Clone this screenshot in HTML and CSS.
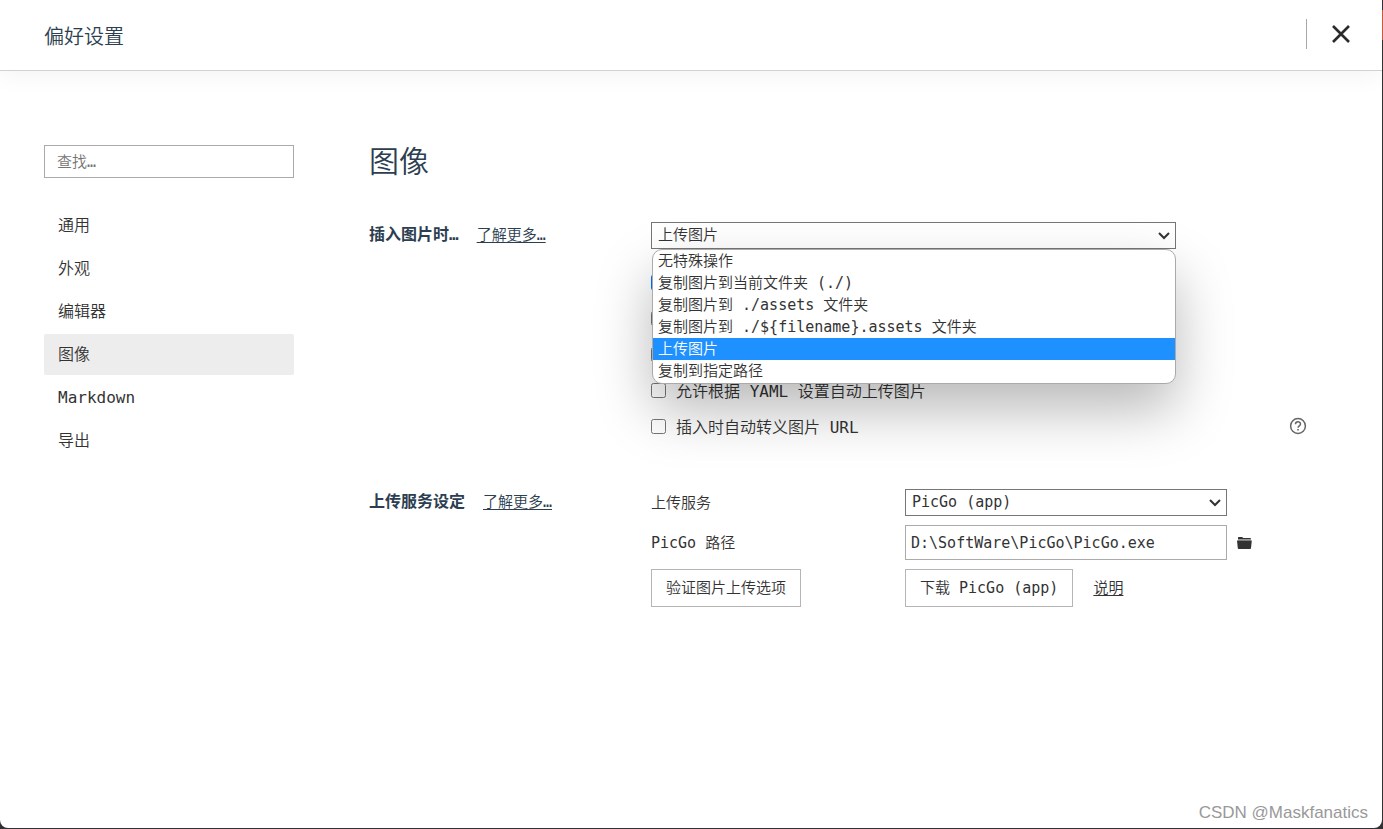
FILE: index.html
```html
<!DOCTYPE html>
<html lang="zh-CN">
<head>
<meta charset="utf-8">
<title>偏好设置</title>
<link rel="stylesheet" href="styles.css">
</head>
<body>
<div class="window">
  <header class="header">
    <h1 class="header-title">偏好设置</h1>
    <button class="close" type="button" aria-label="关闭">
      <svg width="20" height="20" viewBox="0 0 20 20"><path d="M2 2L18 18M18 2L2 18" fill="none" stroke="#2b2b2e" stroke-width="2.6"/></svg>
    </button>
  </header>

  <div class="body">
    <aside class="sidebar">
      <input class="search" type="text" placeholder="查找…" aria-label="查找">
      <nav class="nav">
        <a class="nav-item" href="#general">通用</a>
        <a class="nav-item" href="#appearance">外观</a>
        <a class="nav-item" href="#editor">编辑器</a>
        <a class="nav-item active" href="#image" aria-current="page">图像</a>
        <a class="nav-item" href="#markdown">Markdown</a>
        <a class="nav-item" href="#export">导出</a>
      </nav>
    </aside>

    <main class="main">
      <h2 class="page-title">图像</h2>

      <section class="section">
        <div class="section-label">
          <label class="section-name" for="insert">插入图片时…</label>
          <a class="link" href="#more-insert">了解更多…</a>
        </div>
        <div class="section-content">
          <div class="insert">
            <div class="select-wrap">
              <select class="select" id="insert"><option>上传图片</option></select>
              <svg class="chevron" width="12" height="8" viewBox="0 0 12 8"><path d="M1 1L6 6L11 1" fill="none" stroke="#333" stroke-width="2"/></svg>
            </div>
            <ul class="menu" role="listbox" aria-label="插入图片时">
              <li class="option" role="option">无特殊操作</li>
              <li class="option" role="option">复制图片到当前文件夹 (./)</li>
              <li class="option" role="option">复制图片到 ./assets 文件夹</li>
              <li class="option" role="option">复制图片到 ./${filename}.assets 文件夹</li>
              <li class="option selected" role="option" aria-selected="true">上传图片</li>
              <li class="option" role="option">复制到指定路径</li>
            </ul>
          </div>
          <div class="checks">
            <div class="check"><input class="box" type="checkbox" checked aria-label="对本地位置的图片应用上述规则"></div>
            <div class="check"><input class="box" type="checkbox" aria-label="对网络位置的图片应用上述规则"></div>
            <div class="check"><input class="box" type="checkbox" aria-label="优先使用相对路径"></div>
            <div class="check"><input class="box" type="checkbox" id="yaml"><label class="check-label" for="yaml">允许根据 YAML 设置自动上传图片</label></div>
            <div class="check">
              <input class="box" type="checkbox" id="escape"><label class="check-label" for="escape">插入时自动转义图片 URL</label>
              <button class="help" type="button" aria-label="帮助">
                <svg width="18" height="18" viewBox="0 0 18 18" fill="none" stroke="#666"><circle cx="9" cy="9" r="7.4" stroke-width="1.5"/><path d="M6.5 7.3C6.5 4 11.5 4 11.5 7C11.5 8.9 9 8.8 9 10.8" stroke-width="1.5"/><path d="M9 12v1.6" stroke-width="1.6"/></svg>
              </button>
            </div>
          </div>
        </div>
      </section>

      <section class="section">
        <div class="section-label">
          <h3 class="section-name">上传服务设定</h3>
          <a class="link" href="#more-upload">了解更多…</a>
        </div>
        <div class="section-content upload">
          <label for="service">上传服务</label>
          <div class="select-wrap">
            <select class="select" id="service"><option>PicGo (app)</option></select>
            <svg class="chevron" width="12" height="8" viewBox="0 0 12 8"><path d="M1 1L6 6L11 1" fill="none" stroke="#333" stroke-width="2"/></svg>
          </div>
          <span></span>
          <label for="path">PicGo 路径</label>
          <input class="path" id="path" type="text" value="D:\SoftWare\PicGo\PicGo.exe">
          <button class="browse" type="button" aria-label="选择文件">
            <svg width="16" height="14" viewBox="0 0 16 14"><path d="M1 3V1.6Q1 1 1.6 1H5.2L6.2 2H13.2Q14 2 14 3.4H1Z" fill="#333"/><path d="M1 4H14" stroke="#999" stroke-width="1"/><path d="M0 4.5H14.8L14 12.2Q13.9 13 13.1 13H1.7Q.9 13 .8 12.2Z" fill="#333"/></svg>
          </button>
          <div><button class="button" type="button">验证图片上传选项</button></div>
          <div class="actions">
            <button class="button" type="button">下载 PicGo (app)</button>
            <a class="link" href="#docs">说明</a>
          </div>
        </div>
      </section>
    </main>
  </div>
  <div class="watermark">CSDN @Maskfanatics</div>
</div>
<div class="edge"></div>
</body>
</html>
```
FILE: styles.css
```css
* { box-sizing: border-box; }

body {
  margin: 0;
  background: #333033;
  color: #333;
  font: 350 15px/22px "DejaVu Sans Mono", "Noto Sans CJK SC", monospace;
}

button, input, select {
  margin: 0;
  font: inherit;
  color: inherit;
}

h1, h2, h3, ul { margin: 0; padding: 0; }

.window {
  position: relative;
  min-height: calc(100vh - 1px);
  margin-right: 1px;
  background: #fff;
  border-radius: 0 0 8px 8px;
  overflow: hidden;
}

.edge {
  position: absolute;
  top: 10px;
  right: 0;
  width: 1px;
  height: 30px;
  background: #c85a3c;
}

.header {
  display: flex;
  align-items: center;
  justify-content: space-between;
  height: 71px;
  padding: 0 31px 0 44px;
  border-bottom: 1px solid #d2d2d2;
  box-shadow: 0 4px 24px rgba(0, 0, 0, .05);
}

.header-title {
  padding-top: 4px;
  font-size: 20px;
  line-height: 30px;
  font-weight: 350;
  color: #2c3e50;
}

.close {
  display: flex;
  align-items: center;
  height: 30px;
  margin-bottom: 3px;
  padding: 0 0 0 24px;
  border: 0;
  border-left: 1px solid #a8a8a8;
  background: none;
}

.body {
  display: flex;
  gap: 75px;
  padding: 74px 75px 80px 44px;
}

.sidebar { flex: 0 0 250px; }

.search {
  display: block;
  width: 100%;
  height: 33px;
  padding: 0 12px;
  border: 1px solid #aaa;
  background: #fff;
}

.search::placeholder { color: #757575; }

.nav {
  display: grid;
  gap: 2px;
  margin-top: 27px;
  font-size: 16px;
}

.nav-item {
  padding: 10px 14px;
  line-height: 21px;
  border-radius: 2px;
  color: #333;
  text-decoration: none;
}

.active { background: #ededed; }

.main { flex: 1; min-width: 0; }

.page-title {
  font-size: 30px;
  line-height: 34px;
  font-weight: 350;
  color: #2c3e50;
}

.section {
  display: flex;
  margin-top: 43px;
}

.section-label {
  flex: 0 0 282px;
  display: flex;
  align-items: center;
  gap: 18px;
  height: 25px;
  color: #2c3e50;
}

.section-name {
  font-size: 16px;
  line-height: 24px;
  font-weight: 600;
}

.link {
  color: inherit;
  text-underline-offset: 2px;
}

.section-content { flex: 1; min-width: 0; }

.insert {
  position: relative;
  width: 80%;
}

.select-wrap {
  display: grid;
  align-items: center;
}

.select, .chevron { grid-area: 1 / 1; }

.select {
  width: 100%;
  height: 27px;
  padding: 0 24px 2px 6px;
  border: 1px solid #767676;
  border-radius: 0;
  background: #fff;
  appearance: none;
}

.chevron {
  justify-self: end;
  margin-right: 6px;
  pointer-events: none;
}

.menu {
  position: absolute;
  z-index: 2;
  top: 100%;
  left: 1px;
  right: 0;
  padding-bottom: 1px;
  border: 1px solid #aaa;
  border-radius: 10px;
  background: #fff;
  box-shadow: 0 26px 56px rgba(0, 0, 0, .28);
  list-style: none;
  overflow: hidden;
}

.option { padding: 0 5px; }

.selected { background: #1e90ff; color: #fff; }

.checks {
  display: grid;
  gap: 12px;
  margin-top: 21px;
  font-size: 16px;
  line-height: 24px;
}

.check {
  display: flex;
  align-items: center;
  gap: 10px;
  height: 24px;
}

.check-label { padding-top: 3px; }

.box { width: 15px; height: 15px; }

.help {
  display: flex;
  margin-left: auto;
  padding: 0;
  border: 0;
  background: none;
}

.section + .section { margin-top: 51px; }

.upload {
  display: grid;
  grid-template-columns: 244px minmax(0, 322px) 16px;
  column-gap: 10px;
  row-gap: 9px;
  align-items: center;
  justify-content: start;
}

.path {
  width: 100%;
  height: 35px;
  padding: 0 5px;
  border: 1px solid #aaa;
  background: #fff;
}

.browse {
  display: flex;
  padding: 0;
  border: 0;
  background: none;
}

.button {
  height: 38px;
  padding: 0 14px;
  border: 1px solid #b5b5b5;
  background: #fff;
}

.actions {
  display: flex;
  align-items: center;
  gap: 20px;
}

.watermark {
  position: absolute;
  right: 14px;
  bottom: 4px;
  color: #999;
  font: 400 17px/22px "Liberation Sans", sans-serif;
}
```
